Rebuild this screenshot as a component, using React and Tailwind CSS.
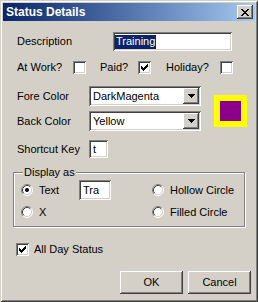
const sunken =
  'shadow-[inset_1px_1px_#808080,inset_-1px_-1px_#ffffff,inset_2px_2px_#404040,inset_-2px_-2px_#d4d0c8]';
const raised =
  'shadow-[inset_-1px_-1px_#404040,inset_1px_1px_#ffffff,inset_-2px_-2px_#808080,inset_2px_2px_#d4d0c8]';

function CheckBox({ checked }) {
  return (
    <div className={`w-[13px] h-[13px] bg-white shrink-0 flex items-center justify-center ${sunken}`}>
      {checked && (
        <svg width="7" height="7" viewBox="0 0 7 7" shapeRendering="crispEdges">
          <path
            fill="#000"
            d="M6 0h1v1h-1z M5 1h2v1h-2z M0 2h1v1h-1z M4 2h3v1h-3z M0 3h2v1h-2z M3 3h3v1h-3z M0 4h5v1h-5z M1 5h3v1h-3z M2 6h1v1h-1z"
          />
        </svg>
      )}
    </div>
  );
}

function Radio({ checked, label, className = '' }) {
  return (
    <div className={`flex items-center gap-[6px] ${className}`}>
      <svg width="12" height="12" viewBox="0 0 12 12" className="shrink-0">
        <circle cx="6" cy="6" r="5" fill="#fff" />
        <path d="M2.11 9.89 A5.5 5.5 0 0 1 9.89 2.11" stroke="#808080" fill="none" />
        <path d="M9.89 2.11 A5.5 5.5 0 0 1 2.11 9.89" stroke="#ffffff" fill="none" />
        <path d="M2.82 9.18 A4.5 4.5 0 0 1 9.18 2.82" stroke="#404040" fill="none" />
        <path d="M9.18 2.82 A4.5 4.5 0 0 1 2.82 9.18" stroke="#d4d0c8" fill="none" />
        {checked && <circle cx="6" cy="6" r="2" fill="#000" />}
      </svg>
      <span>{label}</span>
    </div>
  );
}

function Select({ value }) {
  return (
    <div className={`w-[112px] h-[20px] bg-white flex items-center p-[2px] ${sunken}`}>
      <span className="flex-1 pl-[2px]">{value}</span>
      <div className={`w-[16px] h-[16px] bg-[#d4d0c8] flex items-center justify-center ${raised}`}>
        <svg width="7" height="4" viewBox="0 0 7 4" shapeRendering="crispEdges">
          <path fill="#000" d="M0 0h7v1h-7z M1 1h5v1h-5z M2 2h3v1h-3z M3 3h1v1h-1z" />
        </svg>
      </div>
    </div>
  );
}

function Button({ children }) {
  return (
    <div className={`w-[63px] h-[23px] bg-[#d4d0c8] flex items-center justify-center ${raised}`}>
      {children}
    </div>
  );
}

export default function App() {
  return (
    <div className="w-[258px] h-[302px] bg-[#d4d0c8] p-[3px] font-['Liberation_Sans',Arial,sans-serif] text-[11px] text-black leading-none shadow-[inset_1px_1px_#d4d0c8,inset_-1px_-1px_#404040,inset_2px_2px_#ffffff,inset_-2px_-2px_#808080]">
      {/* title bar */}
      <div className="h-[18px] flex items-center bg-gradient-to-r from-[#0a246a] to-[#a6caf0] pl-[3px]">
        <span className="flex-1 text-white font-bold text-[12px]">Status Details</span>
        <div className={`w-[16px] h-[14px] mr-[2px] bg-[#d4d0c8] flex items-center justify-center ${raised}`}>
          <svg width="8" height="7" viewBox="0 0 8 7" shapeRendering="crispEdges">
            <path
              fill="#000"
              d="M0 0h2v1h-2z M6 0h2v1h-2z M1 1h2v1h-2z M5 1h2v1h-2z M2 2h4v1h-4z M3 3h2v1h-2z M2 4h4v1h-4z M1 5h2v1h-2z M5 5h2v1h-2z M0 6h2v1h-2z M6 6h2v1h-2z"
            />
          </svg>
        </div>
      </div>

      {/* description */}
      <div className="flex items-center ml-[14px] mt-[11px]">
        <span className="w-[96px]">Description</span>
        <div className={`w-[119px] h-[19px] bg-white flex items-center p-[2px] ${sunken}`}>
          <span className="bg-[#0a246a] text-white h-[14px] flex items-center pl-[1px] pr-[1px]">Training</span>
        </div>
      </div>

      {/* flags */}
      <div className="flex items-center ml-[14px] mt-[10px] h-[13px]">
        <span className="w-[56px]">At Work?</span>
        <CheckBox />
        <span className="w-[38px] ml-[14px]">Paid?</span>
        <CheckBox checked />
        <span className="w-[54px] ml-[15px]">Holiday?</span>
        <CheckBox />
      </div>

      {/* colours */}
      <div className="flex mt-[12px]">
        <div className="flex flex-col gap-[5px] ml-[14px]">
          <div className="flex items-center">
            <span className="w-[72px]">Fore Color</span>
            <Select value="DarkMagenta" />
          </div>
          <div className="flex items-center">
            <span className="w-[72px]">Back Color</span>
            <Select value="Yellow" />
          </div>
        </div>
        <div className="ml-[13px] mt-[9px] w-[33px] h-[32px] bg-[#ffff00] flex items-center justify-center">
          <div className="w-[21px] h-[20px] bg-[#8b008b]" />
        </div>
      </div>

      {/* shortcut */}
      <div className="flex items-center ml-[14px] mt-[9px]">
        <span className="w-[72px]">Shortcut Key</span>
        <div className={`w-[19px] h-[18px] bg-white flex items-center pl-[4px] ${sunken}`}>t</div>
      </div>

      {/* display as */}
      <div className="relative ml-[10px] mt-[14px] w-[232px] h-[55px] border border-[#808080] shadow-[inset_1px_1px_#ffffff,1px_1px_#ffffff] pl-[7px] pt-[7px]">
        <span className="absolute left-[9px] -top-[6px] bg-[#d4d0c8] px-[1px]">Display as</span>
        <div className="flex items-center h-[20px]">
          <Radio checked label="Text" className="w-[58px]" />
          <div className={`w-[32px] h-[20px] bg-white flex items-center pl-[4px] ${sunken}`}>Tra</div>
          <Radio label="Hollow Circle" className="ml-[41px]" />
        </div>
        <div className="flex items-center h-[20px] mt-[2px]">
          <Radio label="X" className="w-[131px]" />
          <Radio label="Filled Circle" />
        </div>
      </div>

      {/* all day */}
      <div className="flex items-center gap-[5px] ml-[13px] mt-[16px]">
        <CheckBox checked />
        <span>All Day Status</span>
      </div>

      {/* buttons */}
      <div className="flex justify-end gap-[5px] pr-[4px] mt-[15px]">
        <Button>OK</Button>
        <Button>Cancel</Button>
      </div>
    </div>
  );
}
